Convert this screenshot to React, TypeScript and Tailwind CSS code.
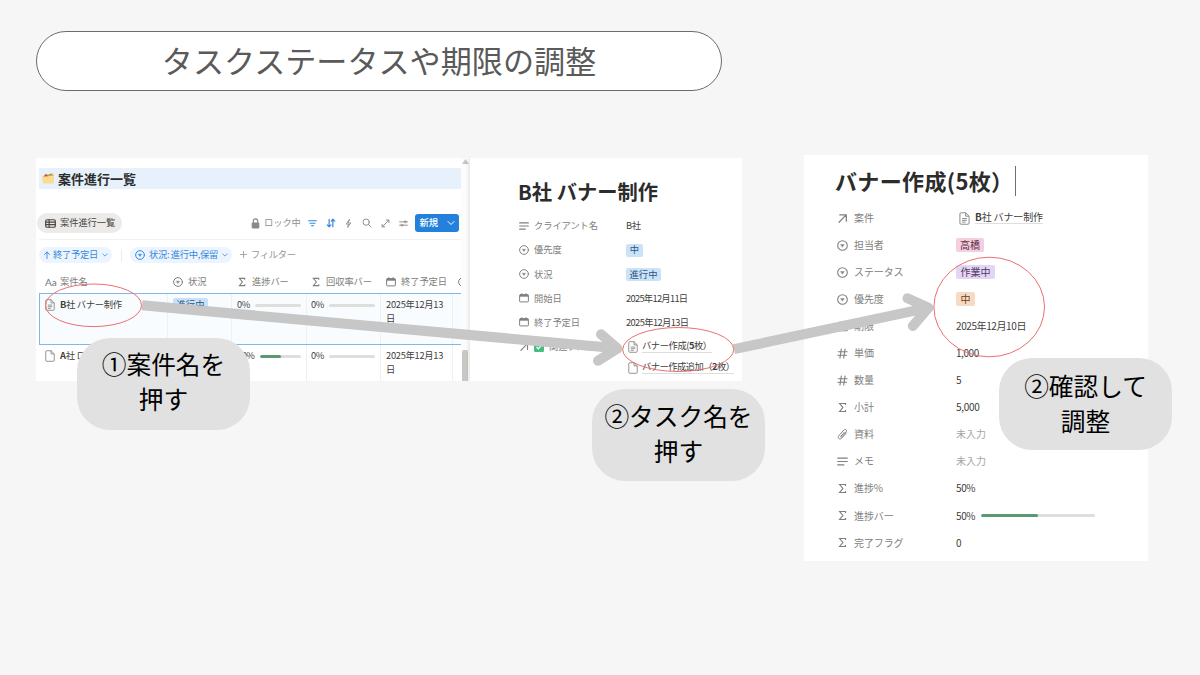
import React from "react";

type P = { className?: string };

const Svg = ({ className = "", children, w = 1.4 }: P & { children: React.ReactNode; w?: number }) => (
  <svg viewBox="0 0 16 16" className={`shrink-0 ${className}`} fill="none" stroke="currentColor" strokeWidth={w} strokeLinecap="round" strokeLinejoin="round">
    {children}
  </svg>
);

const SelectIcon = ({ className }: P) => (
  <Svg className={className} w={1.6}>
    <circle cx="8" cy="8" r="7" />
    <path d="M5.4 6.6h5.2L8 10.2z" fill="currentColor" strokeWidth="0.6" />
  </Svg>
);
const SigmaIcon = ({ className }: P) => (
  <Svg className={className} w={1.7}>
    <path d="M12.4 4.4V2.2H3.8L8.6 8l-4.8 5.8h8.6v-2.2" strokeLinecap="butt" strokeLinejoin="miter" />
  </Svg>
);
const CalendarIcon = ({ className }: P) => (
  <Svg className={className} w={1.6}>
    <rect x="1" y="2.6" width="14" height="11.6" rx="1.2" />
    <path d="M1 4.4h14" strokeWidth="3" strokeLinecap="butt" />
    <path d="M4.6 1v2M11.4 1v2" />
  </Svg>
);
const LinesIcon = ({ className }: P) => (
  <Svg className={className} w={1.7}>
    <path d="M1 3h14M1 8h14M1 13h9" />
  </Svg>
);
const ArrowIcon = ({ className }: P) => (
  <Svg className={className} w={1.8}>
    <path d="M3 13.5L13 3M4 2.6h9.6V12" />
  </Svg>
);
const HashIcon = ({ className }: P) => (
  <Svg className={className} w={1.7}>
    <path d="M6.3 1.5L4.3 14.5M11.7 1.5L9.7 14.5M2 5.4h12.8M1.2 10.6H14" />
  </Svg>
);
const ClipIcon = ({ className }: P) => (
  <Svg className={className} w={1.4}>
    <path d="M10.8 4.6L5.4 10.8c-.6.9.5 1.7 1.2 1l6.6-7.4c2-2.6-1.2-5-3.4-2.8L2.6 9.8c-2.4 3.2 1.4 6.4 4.2 3.6l6.8-7.6" />
  </Svg>
);
const DocIcon = ({ className, lines }: P & { lines?: boolean }) => (
  <svg viewBox="0 0 14 17" className={`shrink-0 ${className}`} fill="none" stroke="currentColor" strokeWidth="1.3" strokeLinejoin="round">
    <path d="M3 1h5.5L13 5.5V14.5a1.5 1.5 0 0 1-1.5 1.5H2.5A1.5 1.5 0 0 1 1 14.5V2.5A1.5 1.5 0 0 1 2.5 1zM8.5 1v4.5H13" />
    {lines && <path d="M3.8 8.6h6.4M3.8 10.9h6.4M3.8 13.2h4.4" />}
  </svg>
);
const Chevron = ({ className }: P) => (
  <Svg className={className} w={2}>
    <path d="M2 5l6 6 6-6" />
  </Svg>
);

const icons = { select: SelectIcon, sigma: SigmaIcon, date: CalendarIcon, lines: LinesIcon, arrow: ArrowIcon, hash: HashIcon, clip: ClipIcon };
type IconName = keyof typeof icons;

const Bar = ({ className = "", fill = "" }: { className?: string; fill?: string }) => (
  <span className={`block h-[2.6px] shrink-0 overflow-hidden rounded-full bg-[#dededd] ${className}`}>
    <span className={`block h-full rounded-full bg-[#5a9a72] ${fill}`} />
  </span>
);

const HeaderCell = ({ icon, label, className }: { icon: IconName; label: string; className: string }) => {
  const Icon = icons[icon];
  return (
    <div className={`flex shrink-0 items-center gap-[5px] pl-[5px] ${className}`}>
      <Icon className="size-[10px]" />
      <span className="tracking-[-0.1px]">{label}</span>
    </div>
  );
};

const cell = "shrink-0 border-r border-[#eef1f4]";

function ListPane() {
  return (
    <div className="flex w-[433px] shrink-0 overflow-hidden text-[9.3px] leading-none">
      <div className="flex w-[425px] shrink-0 flex-col overflow-hidden">
        <div className="mt-[10px] ml-[3px] flex h-[21px] shrink-0 items-center bg-[#e6f1fb] pl-[3px]">
          <svg viewBox="0 0 24 24" className="size-[13px] shrink-0">
            <path d="M1 9l6-6 5 2 7-3 3 5v5H1z" fill="#f0ad4e" />
            <path d="M3 8l5-4 3 3z" fill="#b04a68" />
            <path d="M10 6l6-3 2 4z" fill="#6c9b59" />
            <path d="M1 9h9l3-2h9v12a2 2 0 0 1-2 2H3a2 2 0 0 1-2-2z" fill="#fadb91" />
          </svg>
          <span className="ml-[3px] pb-px text-[13px] font-bold text-[#2c2c2b]">案件進行一覧</span>
        </div>

        <div className="mt-[23px] flex h-[22px] shrink-0 items-center pl-px">
          <div className="flex h-[20px] w-[85px] shrink-0 items-center rounded-full bg-[#ecebea] pl-[8px] text-[#484744]">
            <Svg className="size-[11px]" w={1.7}>
              <rect x="1" y="2.5" width="14" height="11" rx="2" />
              <path d="M1 6h14M1 9.7h14M6 2.5v11" />
            </Svg>
            <span className="ml-[4px] tracking-[-0.1px]">案件進行一覧</span>
          </div>
          <div className="ml-[129px] flex items-center text-[#8a8987]">
            <svg viewBox="0 0 16 20" className="h-[11px] w-[9px]" fill="none" stroke="currentColor" strokeWidth="2">
              <path d="M4 9V5.5a4 4 0 0 1 8 0V9" />
              <rect x="2" y="9" width="12" height="9" rx="1" fill="currentColor" />
            </svg>
            <span className="ml-[4px] w-[44px] tracking-[-0.1px] text-[#918f8c]">ロック中</span>
            <Svg className="size-[9px] text-[#3587dc]" w={2}><path d="M1 3h14M3.5 7.5h9M6 12h4" /></Svg>
            <Svg className="ml-[9px] size-[10px] text-[#3587dc]" w={1.9}><path d="M5 2v12M2 11l3 3 3-3M11 14V2M8.5 5L11 2l3 3" /></Svg>
            <Svg className="ml-[8px] size-[9px]" w={1.6}><path d="M9.5 1L4 9h4l-1.5 6L12 7H8z" /></Svg>
            <Svg className="ml-[9px] size-[9.5px]" w={1.6}><circle cx="7" cy="7" r="5.3" /><path d="M11 11l4 4" /></Svg>
            <Svg className="ml-[9px] size-[9px]" w={1.7}><path d="M2 14L14 2M9.5 1.8H14V6.5M2 9.5V14h4.5" /></Svg>
            <Svg className="ml-[9px] size-[9px]" w={1.6}><path d="M1 5h8M13 5h2M1 11h2M7 11h8" /><circle cx="11" cy="5" r="1.8" /><circle cx="5" cy="11" r="1.8" /></Svg>
          </div>
          <div className="ml-[7px] flex h-[18px] w-[44px] shrink-0 items-center justify-between rounded-[3px] bg-[#2381dc] pr-[4px] pl-[5px] font-medium text-white">
            <span>新規</span>
            <Chevron className="size-[8px]" />
          </div>
        </div>
        <div className="mt-[5px] ml-[3px] h-px shrink-0 bg-[#f1f1f0]" />

        <div className="mt-[7px] flex h-[16px] shrink-0 items-center pl-[3px] text-[#3587dc]">
          <div className="flex h-[16px] w-[73px] shrink-0 items-center rounded-full bg-[#ecf5fd] pl-[4px]">
            <Svg className="size-[8px]" w={1.8}><path d="M8 15V2M3 7l5-5 5 5" /></Svg>
            <span className="ml-[2px] tracking-[-0.3px]">終了予定日</span>
            <Chevron className="ml-[4px] size-[6px]" />
          </div>
          <div className="ml-[9px] h-[13px] w-px bg-[#ececeb]" />
          <div className="ml-[8px] flex h-[16px] w-[102px] shrink-0 items-center rounded-full bg-[#ecf5fd] pl-[5px]">
            <SelectIcon className="size-[10px]" />
            <span className="ml-[4px] tracking-[-0.35px]">状況: 進行中,保留</span>
            <Chevron className="ml-[4px] size-[6px]" />
          </div>
          <div className="ml-[8px] flex items-center text-[#989794]">
            <Svg className="size-[7px]" w={1.9}><path d="M8 1v14M1 8h14" /></Svg>
            <span className="ml-[4px] tracking-[-0.3px]">フィルター</span>
          </div>
        </div>

        <div className="mt-[8px] flex h-[22px] shrink-0 items-center pl-[4px] text-[#7e7d7a]">
          <div className="flex w-[128px] shrink-0 items-center pl-[5px]">
            <span className="w-[15px] font-['Lato'] text-[10px] font-medium">Aa</span>
            <span className="tracking-[-0.1px]">案件名</span>
          </div>
          <HeaderCell icon="select" label="状況" className="w-[64px]" />
          <HeaderCell icon="sigma" label="進捗バー" className="w-[74px]" />
          <HeaderCell icon="sigma" label="回収率バー" className="w-[75px]" />
          <HeaderCell icon="date" label="終了予定日" className="w-[72px]" />
          <HeaderCell icon="select" label="" className="w-[20px]" />
        </div>

        <div className="ml-[3px] flex h-[52px] shrink-0 border-y border-l border-[#83b7e8] bg-[#f9fcff] text-[#3f3e3b]">
          <div className={`flex w-[128px] items-start pt-[5px] pl-[5px] ${cell}`}>
            <DocIcon lines className="h-[12px] w-[10px] text-[#8c8b88]" />
            <span className="mt-[1px] ml-[5px] tracking-[-0.3px]"><b className="font-bold">B</b>社 バナー制作</span>
          </div>
          <div className={`w-[64px] pt-[4px] pl-[5px] ${cell}`}>
            <span className="flex h-[13px] w-[35px] items-center justify-center rounded-[2px] bg-[#c9e1f8] text-[#2d5680]">進行中</span>
          </div>
          <div className={`flex w-[75px] items-start pt-[6px] pl-[5px] ${cell}`}>
            <span className="w-[18px] tracking-[-0.5px]">0%</span>
            <Bar className="mt-[4px] w-[46px]" fill="w-0" />
          </div>
          <div className={`flex w-[74px] items-start pt-[6px] pl-[4px] ${cell}`}>
            <span className="w-[18px] tracking-[-0.5px]">0%</span>
            <Bar className="mt-[4px] w-[46px]" fill="w-0" />
          </div>
          <div className={`w-[72px] pt-[4px] pl-[5px] leading-[13.5px] tracking-[-0.28px] ${cell}`}>2025年12月13<br />日</div>
        </div>
        <div className="ml-[4px] flex h-[50px] shrink-0 text-[#3f3e3b]">
          <div className={`flex w-[128px] items-start pt-[5px] pl-[5px] ${cell}`}>
            <DocIcon className="h-[12px] w-[10px] text-[#8c8b88]" />
            <span className="mt-[1px] ml-[5px] tracking-[-0.3px]"><b className="font-bold">A</b>社 ロ</span>
          </div>
          <div className={`w-[64px] ${cell}`} />
          <div className={`flex w-[75px] items-start pt-[6px] pl-[5px] ${cell}`}>
            <span className="w-[23px] tracking-[-0.5px]">50%</span>
            <Bar className="mt-[4px] w-[41px]" fill="w-1/2" />
          </div>
          <div className={`flex w-[74px] items-start pt-[6px] pl-[4px] ${cell}`}>
            <span className="w-[18px] tracking-[-0.5px]">0%</span>
            <Bar className="mt-[4px] w-[46px]" fill="w-0" />
          </div>
          <div className={`w-[72px] pt-[4px] pl-[5px] leading-[13.5px] tracking-[-0.28px] ${cell}`}>2025年12月13<br />日</div>
        </div>
      </div>
      <div className="flex w-[8px] flex-col items-center justify-between bg-[#fcfcfc]">
        <svg viewBox="0 0 8 6" className="mt-px h-[5px] w-[7px]"><path d="M4 0l4 6H0z" fill="#c4c4c3" /></svg>
        <div className="h-[31px] w-[5.5px] rounded-t-[2px] bg-[#c8c8c5]" />
      </div>
    </div>
  );
}

const Prop = ({ icon, label, children, big, check }: { icon: IconName; label: string; children?: React.ReactNode; big?: boolean; check?: boolean }) => {
  const Icon = icons[icon];
  return (
    <div className={`flex shrink-0 items-center ${big ? "h-[27.05px]" : "h-[24.1px]"}`}>
      <div className={`flex shrink-0 items-center text-[#81807d] ${big ? "w-[119px] gap-[6px]" : "w-[107px] gap-[5px]"}`}>
        <Icon className={big ? "size-[11px]" : "size-[10px]"} />
        {check && (
          <svg viewBox="0 0 16 16" className="size-[10px]"><rect width="16" height="16" rx="2" fill="#48bd80" /><path d="M4 8l3 3 5-6" fill="none" stroke="#fff" strokeWidth="2" /></svg>
        )}
        <span className="tracking-[-0.1px]">{label}</span>
      </div>
      {children}
    </div>
  );
};

const Tag = ({ children, className }: { children: React.ReactNode; className: string }) => (
  <span className={`flex items-center justify-center rounded-[2px] ${className}`}>{children}</span>
);

function ProjectPane() {
  return (
    <div className="flex w-[273px] shrink-0 flex-col overflow-hidden border-l border-[#ececec] pl-[48px] text-[9.3px] leading-none text-[#3f3e3b] shadow-[-1px_0_3px_rgba(0,0,0,0.08)]">
      <h2 className="mt-[23px] mb-[13px] h-[20px] shrink-0 text-[20.3px] leading-[20px] font-bold text-[#2c2c2b]">B社 バナー制作</h2>
      <div className="flex shrink-0 flex-col pl-px">
        <Prop icon="lines" label="クライアント名"><span className="tracking-[-0.3px]">B社</span></Prop>
        <Prop icon="select" label="優先度"><Tag className="h-[13px] w-[17px] bg-[#cbe3f8] text-[#2d5680]">中</Tag></Prop>
        <Prop icon="select" label="状況"><Tag className="h-[13px] w-[35px] bg-[#cbe3f8] text-[#2d5680]">進行中</Tag></Prop>
        <Prop icon="date" label="開始日"><span className="tracking-[-0.7px]">2025年12月11日</span></Prop>
        <Prop icon="date" label="終了予定日"><span className="tracking-[-0.6px]">2025年12月13日</span></Prop>
        <Prop icon="arrow" label="関連タスク" check>
          <div className="ml-[2px] flex items-center">
            <DocIcon lines className="h-[12px] w-[10px] text-[#8c8b88]" />
            <span className="ml-[4px] border-b border-[#dededc] pt-px pb-px tracking-[-0.45px]">バナー作成(<b className="font-semibold">5</b>枚）</span>
          </div>
        </Prop>
        <div className="mt-px ml-[109px] flex h-[17px] items-center">
          <DocIcon className="h-[12px] w-[10px] text-[#8c8b88]" />
          <span className="ml-[4px] border-b border-[#dededc] pb-px tracking-[-0.55px]">バナー作成追加（<b className="font-semibold">2</b>枚）</span>
        </div>
      </div>
    </div>
  );
}

function TaskPane() {
  return (
    <section className="mt-[-3px] flex h-[406px] w-[343.5px] shrink-0 flex-col overflow-hidden bg-white pl-[33px] text-[10px] leading-none text-[#3f3e3b]">
      <div className="mt-[11px] mb-[8.5px] -ml-[2px] flex h-[30px] shrink-0 items-center">
        <h2 className="w-[180px] pb-[3px] text-[22px] font-bold tracking-[0.35px] whitespace-nowrap text-[#2c2c2b]">バナー作成(5枚）</h2>
        <div className="h-[30px] w-px bg-[#6e6e6e]" />
      </div>
      <Prop big icon="arrow" label="案件">
        <div className="ml-[3px] flex items-center">
          <DocIcon lines className="h-[13px] w-[11px] text-[#8c8b88]" />
          <span className="ml-[5px] border-b border-[#dededc] pb-px tracking-[-0.15px]"><b className="font-bold">B</b>社 バナー制作</span>
        </div>
      </Prop>
      <Prop big icon="select" label="担当者"><Tag className="h-[14px] w-[28px] bg-[#f5cfe0] text-[#5c2e47]">高橋</Tag></Prop>
      <Prop big icon="select" label="ステータス"><Tag className="h-[14px] w-[39px] bg-[#e3d5f3] text-[#4f3a66]">作業中</Tag></Prop>
      <Prop big icon="select" label="優先度"><Tag className="h-[14px] w-[19px] bg-[#f6dac4] text-[#69421f]">中</Tag></Prop>
      <Prop big icon="date" label="期限"><span className="tracking-[-0.4px]">2025年12月10日</span></Prop>
      <Prop big icon="hash" label="単価"><span className="tracking-[-0.45px]">1,000</span></Prop>
      <Prop big icon="hash" label="数量"><span>5</span></Prop>
      <Prop big icon="sigma" label="小計"><span className="tracking-[-0.3px]">5,000</span></Prop>
      <Prop big icon="clip" label="資料"><span className="text-[#a5a4a2]">未入力</span></Prop>
      <Prop big icon="lines" label="メモ"><span className="text-[#a5a4a2]">未入力</span></Prop>
      <Prop big icon="sigma" label="進捗%"><span className="tracking-[-0.4px]">50%</span></Prop>
      <Prop big icon="sigma" label="進捗バー">
        <span className="w-[25px] tracking-[-0.4px]">50%</span>
        <Bar className="w-[114px]" fill="w-1/2" />
      </Prop>
      <Prop big icon="sigma" label="完了フラグ"><span>0</span></Prop>
    </section>
  );
}

const Callout = ({ lines, className }: { lines: [string, string]; className: string }) => (
  <div className={`absolute flex h-[92px] w-[173px] flex-col items-center justify-center rounded-[33px] bg-[#e1e1e1] text-[24.7px] leading-[34.6px] text-black ${className}`}>
    <span>{lines[0]}</span>
    <span>{lines[1]}</span>
  </div>
);

export default function App() {
  return (
    <main className="relative h-[675px] w-[1200px] overflow-hidden bg-[#f6f6f6] pt-[31px] pl-[36px] font-['Noto_Sans_CJK_JP',sans-serif] whitespace-nowrap">
      <header className="flex h-[60px] w-[686px] items-center justify-center rounded-full border border-[#6b6b6b] bg-white">
        <h1 className="pb-[2px] text-[31.1px] leading-none text-[#5a5a5a]">タスクステータスや期限の調整</h1>
      </header>

      <div className="mt-[67px] flex items-start gap-[62px]">
        <section className="flex h-[223px] w-[706px] shrink-0 overflow-hidden bg-white">
          <ListPane />
          <ProjectPane />
        </section>
        <TaskPane />
      </div>

      <svg viewBox="0 0 1200 675" className="pointer-events-none absolute inset-0 size-full" fill="none">
        <g stroke="#c7c7c7" strokeWidth="10" strokeLinejoin="round">
          <path d="M142 305.3L617 348.3" />
          <path d="M601 334.2L617.5 348.6L598 360.8Z" strokeLinecap="round" stroke="none" />
          <path d="M601 334.2L617.5 348.6L598 360.8" strokeLinecap="round" />
          <path d="M734 349.2L928 307.8" />
          <path d="M907.5 298.3L928.5 307.8L912.8 326" strokeLinecap="round" />
        </g>
        <g stroke="#e8716e" strokeWidth="1">
          <ellipse cx="93.5" cy="305.3" rx="48" ry="21.3" />
          <ellipse cx="678.2" cy="349.5" rx="55.5" ry="22" />
          <ellipse cx="989.2" cy="307" rx="55.3" ry="49.8" />
        </g>
      </svg>

      <Callout className="top-[337.5px] left-[77px] pb-[5px]" lines={["①案件名を", "押す"]} />
      <Callout className="top-[389px] left-[592px] pb-[4px]" lines={["②タスク名を", "押す"]} />
      <Callout className="top-[358px] left-[999px] pb-[3px]" lines={["②確認して", "調整"]} />
    </main>
  );
}
